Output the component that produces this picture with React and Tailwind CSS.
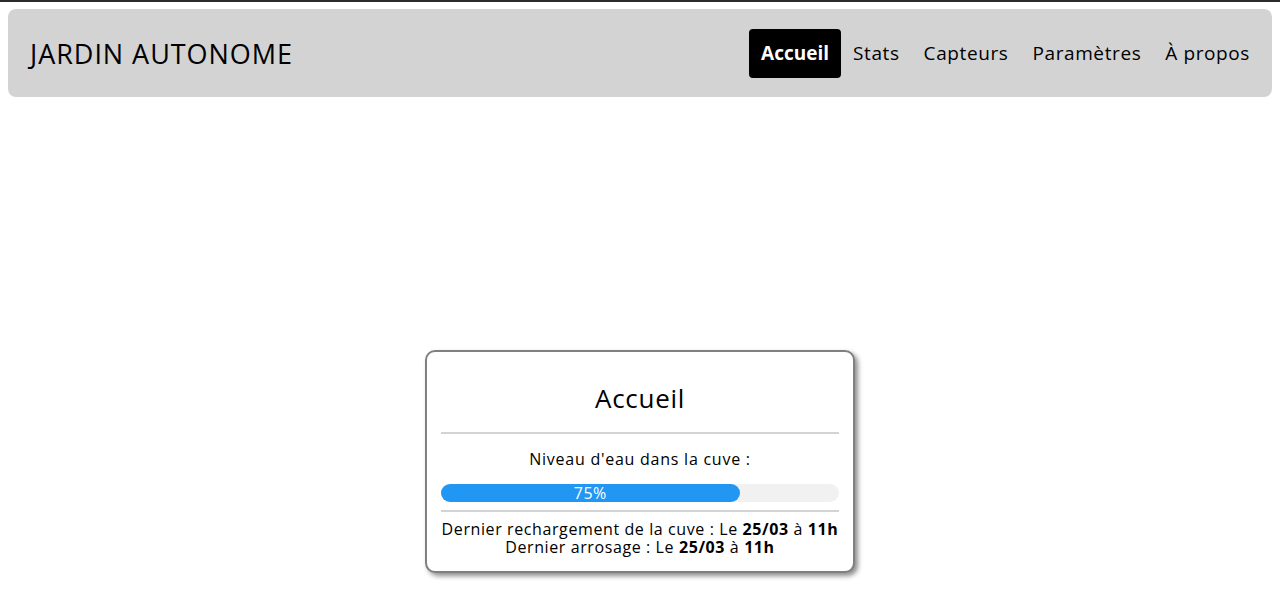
export default function App() {
  const font = { fontFamily: '"Open Sans", "Noto Sans", sans-serif' };
  return (
    <div className="min-h-[603px] bg-white text-black" style={font}>
      <div className="h-[2px] bg-[#2b2b2b]" />
      <header className="mx-2 mt-[7px] flex h-[88px] items-center justify-between rounded-lg bg-[#d3d3d3] pl-[22px] pr-[10px]">
        <div className="text-[27px] leading-none tracking-[0.95px]">JARDIN AUTONOME</div>
        <nav className="flex items-center text-[19px] tracking-[0.6px]">
          <a className="flex h-[49px] items-center rounded bg-black px-3 font-bold tracking-normal text-white">Accueil</a>
          <a className="flex h-[49px] items-center px-3">Stats</a>
          <a className="flex h-[49px] items-center px-3">Capteurs</a>
          <a className="flex h-[49px] items-center px-3">Paramètres</a>
          <a className="flex h-[49px] items-center px-3">À propos</a>
        </nav>
      </header>
      <div className="mt-[253px] flex justify-center">
        <div className="w-[430px] rounded-[10px] border-2 border-[#808080] bg-white px-[14px] pb-[15px] pt-[30px] shadow-[3px_3px_5px_rgba(0,0,0,0.45)]">
          <h1 className="text-center text-[26px] leading-[32px] tracking-[0.7px]">Accueil</h1>
          <div className="mt-[18px] h-[2px] bg-[#d3d3d3]" />
          <p className="mt-[13px] text-center text-[16px] leading-[24px] tracking-[0.75px]">Niveau d'eau dans la cuve :</p>
          <div className="mt-[13px] h-[18px] rounded-full bg-[#f1f1f1]">
            <div className="flex h-full items-center justify-center rounded-full bg-[#2196f3] text-[16px] leading-none tracking-[0.5px] text-white" style={{ width: '75%' }}>75%</div>
          </div>
          <div className="mt-[8px] h-[2px] bg-[#d3d3d3]" />
          <div className="mt-[8px] whitespace-nowrap text-center text-[16px] leading-[18px] tracking-[0.6px]">
            <div>Dernier rechargement de la cuve : Le <b>25/03</b> à <b>11h</b></div>
            <div>Dernier arrosage : Le <b>25/03</b> à <b>11h</b></div>
          </div>
        </div>
      </div>
    </div>
  );
}
